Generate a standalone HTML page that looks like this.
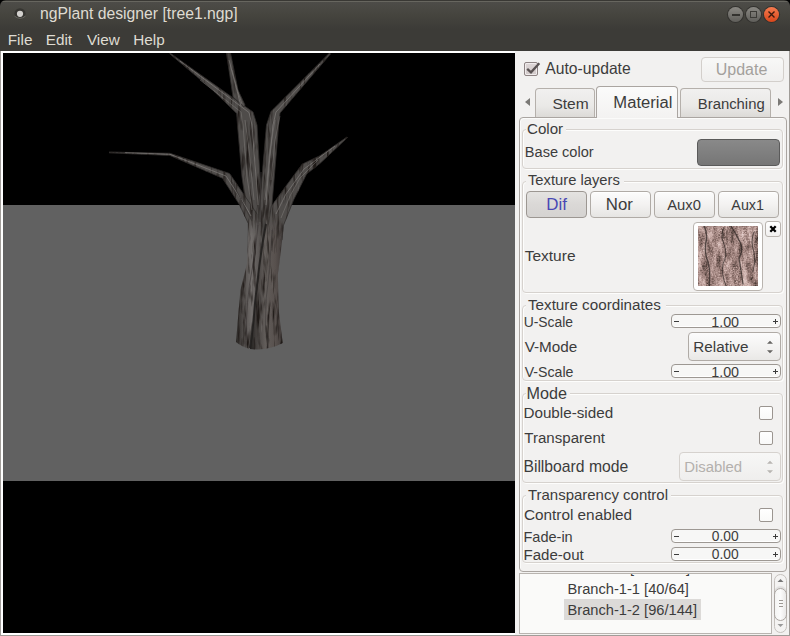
<!DOCTYPE html>
<html><head><meta charset="utf-8"><style>
html,body{margin:0;padding:0}
body{width:790px;height:636px;position:relative;overflow:hidden;background:#000;font-family:"Liberation Sans",sans-serif}
.t{position:absolute;white-space:nowrap;line-height:20px;font-family:"Liberation Sans",sans-serif}
</style></head><body>
<div style="position:absolute;left:0px;top:0px;width:790px;height:51px;box-sizing:border-box;background:linear-gradient(#393834 0px,#393834 1px,#67665f 1px,#67665f 2px,#4d4c48 2px,#46453f 14px,#3e3d39 26px,#3c3b37 30px,#3c3b37 51px);border-radius:6px 6px 0 0"></div>
<svg style="position:absolute;left:12px;top:6px" width="16" height="16"><circle cx="8" cy="7.8" r="5.6" fill="#363531"/><path d="M2.6 10.2 Q8 14.6 13.4 10.2" stroke="#75746e" stroke-width="1" fill="none" opacity="0.8"/><circle cx="8" cy="7.8" r="3.1" fill="#d3d1ce"/></svg>
<div class="t" style="left:39.95px;top:4px;font-size:15.74px;color:#dfdbd2;">ngPlant designer [tree1.ngp]</div>
<div style="position:absolute;left:728px;top:7px;width:15px;height:15px;border-radius:50%;background:linear-gradient(#8a8883,#5f5e5a);box-shadow:0 0 0 1px #33322f"></div>
<div style="position:absolute;left:731.5px;top:14px;width:8px;height:1.5px;background:#33322f"></div>
<div style="position:absolute;left:746px;top:7px;width:15px;height:15px;border-radius:50%;background:linear-gradient(#8a8883,#5f5e5a);box-shadow:0 0 0 1px #33322f"></div>
<div style="position:absolute;left:750px;top:11px;width:7px;height:7px;border:1.5px solid #3c3b37;box-sizing:border-box"></div>
<div style="position:absolute;left:764px;top:7px;width:15px;height:15px;border-radius:50%;background:linear-gradient(#f57b4f,#d9461a);box-shadow:0 0 0 1px #33322f"></div>
<svg style="position:absolute;left:764px;top:7px" width="15" height="15"><path d="M4.5 4.5L10.5 10.5M10.5 4.5L4.5 10.5" stroke="#3c1a0e" stroke-width="1.4"/></svg>
<div class="t" style="left:7.74px;top:30px;font-size:15.3px;color:#dfdbd2;">File</div>
<div class="t" style="left:45.74px;top:30px;font-size:15.3px;color:#dfdbd2;">Edit</div>
<div class="t" style="left:86.93px;top:30px;font-size:15.3px;color:#dfdbd2;">View</div>
<div class="t" style="left:133.24px;top:30px;font-size:15.3px;color:#dfdbd2;">Help</div>
<div style="position:absolute;left:0px;top:51px;width:515px;height:585px;box-sizing:border-box;background:#fff"></div>
<div style="position:absolute;left:0px;top:51px;width:1px;height:585px;box-sizing:border-box;background:#a09c98"></div>
<div style="position:absolute;left:3px;top:53px;width:512px;height:580px;box-sizing:border-box;background:#000"></div>
<div style="position:absolute;left:3px;top:205px;width:512px;height:276px;box-sizing:border-box;background:#616161"></div>
<div style="position:absolute;left:0px;top:635px;width:790px;height:1px;box-sizing:border-box;background:#a09c98"></div>
<div style="position:absolute;left:789px;top:51px;width:1px;height:585px;box-sizing:border-box;background:#a09c98"></div>
<svg style="position:absolute;left:0;top:0" width="515" height="636" viewBox="0 0 515 636">
<defs>
<linearGradient id="gt" x1="0" y1="0" x2="1" y2="0">
<stop offset="0" stop-color="#2c2928"/><stop offset="0.1" stop-color="#4b4745"/><stop offset="0.28" stop-color="#666260"/><stop offset="0.45" stop-color="#383433"/><stop offset="0.58" stop-color="#4f4b49"/><stop offset="0.8" stop-color="#6a6664"/><stop offset="0.92" stop-color="#565250"/><stop offset="1" stop-color="#383433"/>
</linearGradient>
<linearGradient id="gtl" x1="0" y1="0" x2="1" y2="0">
<stop offset="0" stop-color="#2b2826"/><stop offset="0.2" stop-color="#4b4745"/><stop offset="0.5" stop-color="#706c6a"/><stop offset="0.8" stop-color="#55514f"/><stop offset="1" stop-color="#201e1c"/>
</linearGradient>
<linearGradient id="gtr" x1="0" y1="0" x2="1" y2="0">
<stop offset="0" stop-color="#201e1c"/><stop offset="0.18" stop-color="#433f3d"/><stop offset="0.45" stop-color="#625d5a"/><stop offset="0.75" stop-color="#58514e"/><stop offset="0.92" stop-color="#46403e"/><stop offset="1" stop-color="#2c2928"/>
</linearGradient>
<linearGradient id="tmg" gradientUnits="userSpaceOnUse" x1="0" y1="212" x2="0" y2="236"><stop offset="0" stop-color="#fff" stop-opacity="0"/><stop offset="1" stop-color="#fff" stop-opacity="1"/></linearGradient>
<mask id="tm" maskUnits="userSpaceOnUse" x="0" y="0" width="515" height="636"><rect x="0" y="0" width="515" height="636" fill="url(#tmg)"/></mask>
<filter id="tex" x="0" y="0" width="1" height="1" color-interpolation-filters="sRGB">
<feTurbulence type="fractalNoise" baseFrequency="0.3 0.04" numOctaves="3" seed="9" result="n"/>
<feColorMatrix in="n" type="matrix" values="0 0 0 0 0.12  0 0 0 0 0.1  0 0 0 0 0.09  -2.8 0 0 0 1.45" result="a"/>
<feComposite in="a" in2="SourceGraphic" operator="in" result="d"/>
<feTurbulence type="fractalNoise" baseFrequency="0.35 0.05" numOctaves="2" seed="21" result="n2"/>
<feColorMatrix in="n2" type="matrix" values="0 0 0 0 0.53  0 0 0 0 0.515  0 0 0 0 0.505  1.8 0 0 0 -1.25" result="a2"/>
<feComposite in="a2" in2="SourceGraphic" operator="in" result="l"/>
<feMerge><feMergeNode in="SourceGraphic"/><feMergeNode in="d"/><feMergeNode in="l"/></feMerge>
</filter>
</defs>
<g filter="url(#tex)">
<g fill="#4f4c4a" stroke="#302d2c" stroke-width="0.8">
<polygon points="170,53 253,112 257,125 260,177 267,240 251,240 242,177 237.5,125 236.7,113.4 212.7,90 170,54"/>
<polygon points="226.5,53 230.5,53 238,90 245,105 244,107 233,97"/>
<polygon points="329.5,53 330.5,54 280,113 278.6,125 274.3,177 269,240 257,240 262,177 266.5,125 271,111.5"/>
<polygon points="109,152 170,153.3 229.6,173.5 251,205 257,214 258,240 248.5,240 248.3,223.5 239.7,205 222.5,178.2 170,155.5 109,152.8"/>
<polygon points="347,137 320,155.7 302.3,164.1 285.4,186.8 271.2,206.6 266,240 282,240 283.2,226 293.8,199.5 306.6,174 320,163.4 347.5,137.6"/>
</g>
<g mask="url(#tm)">
<path fill="url(#gtl)" d="M249,214 L262,205 L267,210 L266,224 Q261,250 258,277 Q255,300 253.6,320 Q252,335 250,349 Q242,347 236,342 L240.4,290 L247,264 L248.3,223.5 Z"/>
<path fill="url(#gtr)" d="M262,205 L272,205 L283.7,226.8 L281,250 L277.8,275 L278.9,312 L282.7,343 Q268,351 250,349 Q252,335 253.6,320 Q255,300 258,277 Q261,250 266,224 Z"/>
</g>
</g>
<g fill="none" stroke="#928e8c" stroke-width="0.8" opacity="0.65">
<polyline points="180,61 249,112.5 252,125 256,177 258,205"/>
<polyline points="200,80 241,112 243,125 247,177 252,210" stroke-width="0.6"/>
<polyline points="232,70 238,92 242,104" stroke-width="0.6"/>
<polyline points="245,120 249,150 254,200" stroke-width="0.6"/>
<polyline points="275,120 270,150 265,200" stroke-width="0.6"/>
<polyline points="280,116 275,140 271,180" stroke-width="0.5"/>
<polyline points="229,60 241,106"/>
<polyline points="320,64 276,112 273,125 268,177 266,205"/>
<polyline points="125,152.6 170,154.3 226,176 246,207 251,216"/>
<polyline points="335,146 304,169 286,194 276,214" />
<polyline points="318,160 300,178 290,196 281,218" stroke-width="0.6"/>
</g>
<g fill="none" stroke="#383433" stroke-width="1" opacity="0.8">
<polyline points="261,172 260,222"/>
<polyline points="232,182 252,221"/>
</g>
<path d="M266,224 Q261,250 258,277 Q255,300 253.6,320 Q252,335 250,348" stroke="#211f1e" stroke-width="2" fill="none" opacity="0.9"/>
<path d="M258,225 Q256,250 252,270 Q246,300 246,340" stroke="#383433" stroke-width="1" fill="none" opacity="0.6"/>
<path d="M272,230 Q270,270 266,300 Q264,325 268,348" stroke="#383433" stroke-width="1" fill="none" opacity="0.5"/>
</svg>
<div style="position:absolute;left:515px;top:51px;width:274px;height:584px;box-sizing:border-box;background:#f2f1f0"></div>
<div style="position:absolute;left:524px;top:62px;width:14px;height:14px;box-sizing:border-box;border:1px solid #8e8484;border-radius:2px;background:linear-gradient(#ddd6d6,#d2caca);box-shadow:inset 0 0 0 1px #f0ecec"></div>
<svg style="position:absolute;left:524px;top:60px" width="18" height="18"><path d="M3.2 8.8L7 12.3L15.3 3.3" fill="none" stroke="#5a5353" stroke-width="2.3" stroke-linejoin="miter" stroke-linecap="butt"/></svg>
<div class="t" style="left:545.37px;top:59px;font-size:15.67px;color:#3c3c3c;">Auto-update</div>
<div style="position:absolute;left:701px;top:57px;width:83px;height:25px;box-sizing:border-box;border:1px solid #d3cfcb;border-radius:4px;background:linear-gradient(#f8f8f7,#f0efee)"></div>
<div class="t" style="left:715.76px;top:60px;font-size:16.01px;color:#a3a09c;">Update</div>
<svg style="position:absolute;left:522px;top:96px" width="10" height="12"><path d="M8 2L3 6L8 10Z" fill="#7b7976"/></svg>
<svg style="position:absolute;left:776px;top:96px" width="10" height="12"><path d="M2 2L7 6L2 10Z" fill="#7b7976"/></svg>
<div style="position:absolute;left:519px;top:117px;width:268px;height:455px;box-sizing:border-box;border:1px solid #aaa5a1;border-radius:4px;background:#f2f1f0;box-shadow:inset 1px 1px 0 #fbfbfa"></div>
<div style="position:absolute;left:535px;top:88px;width:60px;height:29px;box-sizing:border-box;border:1px solid #b5b0ab;border-bottom:none;border-radius:4px 4px 0 0;background:linear-gradient(#f1f0ef,#eae9e7 60%,#dcdad7)"></div>
<div style="position:absolute;left:680px;top:88px;width:91px;height:29px;box-sizing:border-box;border:1px solid #b5b0ab;border-bottom:none;border-radius:4px 4px 0 0;background:linear-gradient(#f1f0ef,#eae9e7 60%,#dcdad7)"></div>
<div style="position:absolute;left:596px;top:86px;width:82px;height:32px;box-sizing:border-box;border:1px solid #aaa5a1;border-bottom:none;border-radius:4px 4px 0 0;background:linear-gradient(#fbfbfb,#f3f2f1)"></div>
<div class="t" style="left:552.39px;top:94px;font-size:15.56px;color:#3c3c3c;">Stem</div>
<div class="t" style="left:613.34px;top:93px;font-size:16.61px;color:#3c3c3c;">Material</div>
<div class="t" style="left:697.78px;top:94px;font-size:14.87px;color:#3c3c3c;">Branching</div>
<div style="position:absolute;left:522px;top:129px;width:261px;height:40px;box-sizing:border-box;border:1px solid #d6d2ce;border-radius:4px;box-shadow:inset 1px 1px 0 #fdfdfc, 1px 1px 0 #fdfdfc"></div>
<div style="position:absolute;left:526px;top:121px;width:40px;height:12px;box-sizing:border-box;background:#f2f1f0"></div>
<div class="t" style="left:527.03px;top:119px;font-size:15.13px;color:#3c3c3c;">Color</div>
<div class="t" style="left:524.80px;top:142px;font-size:14.58px;color:#3c3c3c;">Base color</div>
<div style="position:absolute;left:697px;top:139px;width:83px;height:27px;box-sizing:border-box;border:1px solid #5a5a5a;border-radius:4px;background:linear-gradient(#898989,#767676)"></div>
<div style="position:absolute;left:522px;top:181px;width:261px;height:112px;box-sizing:border-box;border:1px solid #d6d2ce;border-radius:4px;box-shadow:inset 1px 1px 0 #fdfdfc, 1px 1px 0 #fdfdfc"></div>
<div style="position:absolute;left:526px;top:171px;width:98px;height:14px;box-sizing:border-box;background:#f2f1f0"></div>
<div class="t" style="left:527.97px;top:170px;font-size:14.75px;color:#3c3c3c;">Texture layers</div>
<div style="position:absolute;left:526px;top:191px;width:61px;height:27px;box-sizing:border-box;border:1px solid #9c9792;border-radius:4px;background:linear-gradient(#e4e3e1,#dad8d6 50%,#d5d3d1)"></div>
<div style="position:absolute;left:590px;top:191px;width:61px;height:27px;box-sizing:border-box;border:1px solid #b0aba6;border-radius:4px;background:linear-gradient(#fcfcfc,#f3f2f1 50%,#e6e5e3);box-shadow:inset 0 1px 0 #fff"></div>
<div style="position:absolute;left:654px;top:191px;width:61px;height:27px;box-sizing:border-box;border:1px solid #b0aba6;border-radius:4px;background:linear-gradient(#fcfcfc,#f3f2f1 50%,#e6e5e3);box-shadow:inset 0 1px 0 #fff"></div>
<div style="position:absolute;left:718px;top:191px;width:61px;height:27px;box-sizing:border-box;border:1px solid #b0aba6;border-radius:4px;background:linear-gradient(#fcfcfc,#f3f2f1 50%,#e6e5e3);box-shadow:inset 0 1px 0 #fff"></div>
<div class="t" style="left:546.21px;top:195px;font-size:16.9px;color:#4a48b4;">Dif</div>
<div class="t" style="left:605.82px;top:195px;font-size:16.79px;color:#3c3c3c;">Nor</div>
<div class="t" style="left:667.17px;top:195px;font-size:14.81px;color:#3c3c3c;">Aux0</div>
<div class="t" style="left:731.37px;top:195px;font-size:14.32px;color:#3c3c3c;">Aux1</div>
<div class="t" style="left:524.65px;top:246px;font-size:15.53px;color:#3c3c3c;">Texture</div>
<div style="position:absolute;left:693px;top:222px;width:70px;height:69px;box-sizing:border-box;border:1px solid #b9b4af;border-radius:4px;background:#fff"></div>
<svg style="position:absolute;left:698px;top:226px" width="60" height="60" viewBox="0 0 60 60">
<defs>
<filter id="bk" x="0" y="0" width="60" height="60" filterUnits="userSpaceOnUse" color-interpolation-filters="sRGB">
<feTurbulence type="fractalNoise" baseFrequency="0.16 0.06" numOctaves="4" seed="7" result="n"/>
<feTurbulence type="fractalNoise" baseFrequency="0.7" numOctaves="2" seed="2" result="f"/>
<feComposite in="n" in2="f" operator="arithmetic" k1="0" k2="0.9" k3="0.5" k4="-0.06" result="m"/>
<feColorMatrix in="m" type="matrix" values="1 0 0 0 0  1 0 0 0 0  1 0 0 0 0  0 0 0 0 1" result="g"/>
<feComponentTransfer in="g">
<feFuncR type="table" tableValues="0.13 0.30 0.58 0.80 0.92 0.98"/>
<feFuncG type="table" tableValues="0.11 0.24 0.47 0.69 0.85 0.95"/>
<feFuncB type="table" tableValues="0.10 0.22 0.45 0.67 0.84 0.94"/>
</feComponentTransfer>
</filter>
</defs>
<rect width="60" height="60" filter="url(#bk)"/>
<g fill="none" stroke="#2a2321" stroke-linecap="round" opacity="0.7">
<path d="M6 0 Q10 8 8 16 Q6 26 10 36 Q13 46 11 60" stroke-width="1.4"/>
<path d="M26 2 Q22 10 26 18 Q30 28 25 38 Q23 48 28 60" stroke-width="1"/>
<path d="M33 0 Q38 8 42 16 Q46 24 41 32 Q43 44 45 58" stroke-width="1.3"/>
<path d="M56 6 Q52 16 56 26 Q58 36 55 46" stroke-width="1"/>
</g>
</svg>
<div style="position:absolute;left:765px;top:221px;width:16px;height:16px;box-sizing:border-box;border:1px solid #b9b4af;border-radius:3px;background:linear-gradient(#fff,#f1f0ef)"></div>
<svg style="position:absolute;left:765px;top:221px" width="16" height="16"><path d="M5.3 5.3L10.7 10.7M10.7 5.3L5.3 10.7" stroke="#000" stroke-width="2.3"/></svg>
<div style="position:absolute;left:522px;top:305px;width:261px;height:76px;box-sizing:border-box;border:1px solid #d6d2ce;border-radius:4px;box-shadow:inset 1px 1px 0 #fdfdfc, 1px 1px 0 #fdfdfc"></div>
<div style="position:absolute;left:526px;top:296px;width:140px;height:13px;box-sizing:border-box;background:#f2f1f0"></div>
<div class="t" style="left:527.96px;top:295px;font-size:15.22px;color:#3c3c3c;">Texture coordinates</div>
<div class="t" style="left:523.63px;top:312px;font-size:13.88px;color:#3c3c3c;">U-Scale</div>
<div class="t" style="left:524.63px;top:337px;font-size:15.29px;color:#3c3c3c;">V-Mode</div>
<div class="t" style="left:524.64px;top:362px;font-size:14.17px;color:#3c3c3c;">V-Scale</div>
<div style="position:absolute;left:671px;top:314px;width:110px;height:14px;box-sizing:border-box;border:1px solid #9d9893;border-radius:4px;background:#f7f7f6;box-shadow:inset 0 -1px 0 #fff"></div>
<div style="position:absolute;left:674px;top:321px;width:5px;height:1px;box-sizing:border-box;background:#3c3c3c"></div>
<div style="position:absolute;left:773px;top:321px;width:5px;height:1px;box-sizing:border-box;background:#3c3c3c"></div>
<div style="position:absolute;left:775px;top:319px;width:1px;height:5px;box-sizing:border-box;background:#3c3c3c"></div>
<div class="t" style="left:711.21px;top:312px;font-size:14.33px;color:#3c3c3c;">1.00</div>
<div style="position:absolute;left:688px;top:332px;width:93px;height:29px;box-sizing:border-box;border:1px solid #b0aba6;border-radius:4px;background:linear-gradient(#fcfcfc,#f2f1f0 60%,#e9e8e6)"></div>
<svg style="position:absolute;left:765.5px;top:338.5px" width="8" height="16"><path d="M1 4.8L4 1.8L7 4.8Z M1 11.2L4 14.2L7 11.2Z" fill="#666462"/></svg>
<div class="t" style="left:693.35px;top:337px;font-size:15.25px;color:#3c3c3c;">Relative</div>
<div style="position:absolute;left:671px;top:364px;width:110px;height:14px;box-sizing:border-box;border:1px solid #9d9893;border-radius:4px;background:#f7f7f6;box-shadow:inset 0 -1px 0 #fff"></div>
<div style="position:absolute;left:674px;top:371px;width:5px;height:1px;box-sizing:border-box;background:#3c3c3c"></div>
<div style="position:absolute;left:773px;top:371px;width:5px;height:1px;box-sizing:border-box;background:#3c3c3c"></div>
<div style="position:absolute;left:775px;top:369px;width:1px;height:5px;box-sizing:border-box;background:#3c3c3c"></div>
<div class="t" style="left:711.21px;top:362px;font-size:14.33px;color:#3c3c3c;">1.00</div>
<div style="position:absolute;left:522px;top:393px;width:261px;height:90px;box-sizing:border-box;border:1px solid #d6d2ce;border-radius:4px;box-shadow:inset 1px 1px 0 #fdfdfc, 1px 1px 0 #fdfdfc"></div>
<div style="position:absolute;left:526px;top:384px;width:44px;height:13px;box-sizing:border-box;background:#f2f1f0"></div>
<div class="t" style="left:526.47px;top:383px;font-size:16.16px;color:#3c3c3c;">Mode</div>
<div class="t" style="left:523.45px;top:403px;font-size:15.22px;color:#3c3c3c;">Double-sided</div>
<div class="t" style="left:524.36px;top:428px;font-size:15.05px;color:#3c3c3c;">Transparent</div>
<div class="t" style="left:523.41px;top:457px;font-size:15.73px;color:#3c3c3c;">Billboard mode</div>
<div style="position:absolute;left:759px;top:406px;width:14px;height:14px;box-sizing:border-box;border:1px solid #9b9590;border-radius:2px;background:linear-gradient(#ffffff,#f9f9f8)"></div>
<div style="position:absolute;left:759px;top:431px;width:14px;height:14px;box-sizing:border-box;border:1px solid #9b9590;border-radius:2px;background:linear-gradient(#ffffff,#f9f9f8)"></div>
<div style="position:absolute;left:679px;top:452px;width:102px;height:29px;box-sizing:border-box;border:1px solid #d6d2ce;border-radius:4px;background:linear-gradient(#f7f7f6,#efeeed)"></div>
<svg style="position:absolute;left:765.5px;top:458.5px" width="8" height="16"><path d="M1 4.8L4 1.8L7 4.8Z M1 11.2L4 14.2L7 11.2Z" fill="#b9b6b3"/></svg>
<div class="t" style="left:684.18px;top:457px;font-size:14.9px;color:#b3b0ad;">Disabled</div>
<div style="position:absolute;left:522px;top:495px;width:261px;height:68px;box-sizing:border-box;border:1px solid #d6d2ce;border-radius:4px;box-shadow:inset 1px 1px 0 #fdfdfc, 1px 1px 0 #fdfdfc"></div>
<div style="position:absolute;left:526px;top:486px;width:145px;height:13px;box-sizing:border-box;background:#f2f1f0"></div>
<div class="t" style="left:527.96px;top:485px;font-size:14.97px;color:#3c3c3c;">Transparency control</div>
<div class="t" style="left:523.92px;top:505px;font-size:15.33px;color:#3c3c3c;">Control enabled</div>
<div class="t" style="left:523.51px;top:527px;font-size:14.51px;color:#3c3c3c;">Fade-in</div>
<div class="t" style="left:523.46px;top:545px;font-size:15.07px;color:#3c3c3c;">Fade-out</div>
<div style="position:absolute;left:759px;top:508px;width:14px;height:14px;box-sizing:border-box;border:1px solid #9b9590;border-radius:2px;background:linear-gradient(#ffffff,#f9f9f8)"></div>
<div style="position:absolute;left:671px;top:529px;width:110px;height:14px;box-sizing:border-box;border:1px solid #9d9893;border-radius:4px;background:#f7f7f6;box-shadow:inset 0 -1px 0 #fff"></div>
<div style="position:absolute;left:674px;top:536px;width:5px;height:1px;box-sizing:border-box;background:#3c3c3c"></div>
<div style="position:absolute;left:773px;top:536px;width:5px;height:1px;box-sizing:border-box;background:#3c3c3c"></div>
<div style="position:absolute;left:775px;top:534px;width:1px;height:5px;box-sizing:border-box;background:#3c3c3c"></div>
<div class="t" style="left:711.76px;top:527px;font-size:13.8px;color:#3c3c3c;">0.00</div>
<div style="position:absolute;left:671px;top:547px;width:110px;height:14px;box-sizing:border-box;border:1px solid #9d9893;border-radius:4px;background:#f7f7f6;box-shadow:inset 0 -1px 0 #fff"></div>
<div style="position:absolute;left:674px;top:554px;width:5px;height:1px;box-sizing:border-box;background:#3c3c3c"></div>
<div style="position:absolute;left:773px;top:554px;width:5px;height:1px;box-sizing:border-box;background:#3c3c3c"></div>
<div style="position:absolute;left:775px;top:552px;width:1px;height:5px;box-sizing:border-box;background:#3c3c3c"></div>
<div class="t" style="left:711.76px;top:545px;font-size:13.8px;color:#3c3c3c;">0.00</div>
<div style="position:absolute;left:519px;top:573px;width:253px;height:61px;box-sizing:border-box;border:1px solid #b8b4b0;background:#fafaf9"></div>
<div style="position:absolute;left:564px;top:599px;width:137px;height:21px;box-sizing:border-box;background:#dcdad8"></div>
<div style="position:absolute;left:520px;top:574px;width:250px;height:20px;overflow:hidden"><div class="t" style="left:47.52px;top:-16px;font-size:14.4px;color:#3c3c3c">Branch-1 [128/256]</div></div>
<div class="t" style="left:567.50px;top:579px;font-size:14.67px;color:#3c3c3c;">Branch-1-1 [40/64]</div>
<div class="t" style="left:567.50px;top:600px;font-size:14.66px;color:#3c3c3c;">Branch-1-2 [96/144]</div>
<div style="position:absolute;left:774px;top:574px;width:13px;height:59px;box-sizing:border-box;border:1px solid #c5c1bd;border-radius:7px;background:#f4f3f2"></div>
<svg style="position:absolute;left:774px;top:574px" width="13" height="59"><path d="M3.5 8L6.5 5L9.5 8Z" fill="#777"/><path d="M3.5 50L6.5 53L9.5 50Z" fill="#999"/></svg>
<div style="position:absolute;left:774px;top:588px;width:13px;height:33px;box-sizing:border-box;border:1px solid #aaa5a1;border-radius:7px;background:linear-gradient(90deg,#f4f4f3,#fbfbfb 50%,#e9e8e7);box-shadow:0 -2px 1px rgba(0,0,0,0.08)"></div>
<div style="position:absolute;left:779px;top:600px;width:4px;height:1px;box-sizing:border-box;background:#9c9893"></div>
<div style="position:absolute;left:779px;top:603px;width:4px;height:1px;box-sizing:border-box;background:#9c9893"></div>
<div style="position:absolute;left:779px;top:606px;width:4px;height:1px;box-sizing:border-box;background:#9c9893"></div>
</body></html>
